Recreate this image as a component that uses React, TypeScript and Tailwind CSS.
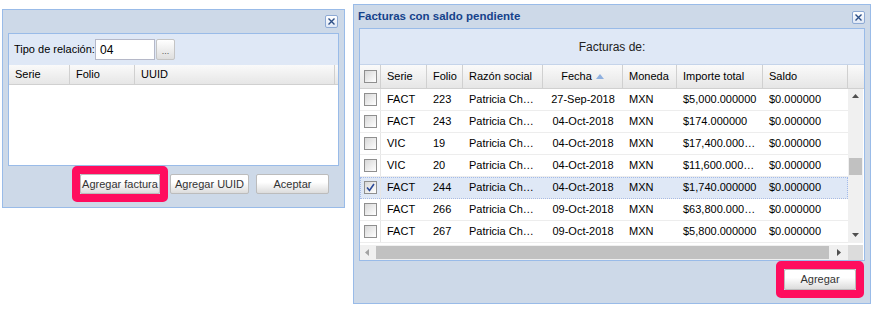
import React from 'react';

const rows = [
  { serie: 'FACT', folio: '223', razon: 'Patricia Ch…', fecha: '27-Sep-2018', moneda: 'MXN', importe: '$5,000.000000', saldo: '$0.000000' },
  { serie: 'FACT', folio: '243', razon: 'Patricia Ch…', fecha: '04-Oct-2018', moneda: 'MXN', importe: '$174.000000', saldo: '$0.000000' },
  { serie: 'VIC', folio: '19', razon: 'Patricia Ch…', fecha: '04-Oct-2018', moneda: 'MXN', importe: '$17,400.000…', saldo: '$0.000000' },
  { serie: 'VIC', folio: '20', razon: 'Patricia Ch…', fecha: '04-Oct-2018', moneda: 'MXN', importe: '$11,600.000…', saldo: '$0.000000' },
  { serie: 'FACT', folio: '244', razon: 'Patricia Ch…', fecha: '04-Oct-2018', moneda: 'MXN', importe: '$1,740.000000', saldo: '$0.000000', selected: true },
  { serie: 'FACT', folio: '266', razon: 'Patricia Ch…', fecha: '09-Oct-2018', moneda: 'MXN', importe: '$63,800.000…', saldo: '$0.000000' },
  { serie: 'FACT', folio: '267', razon: 'Patricia Ch…', fecha: '09-Oct-2018', moneda: 'MXN', importe: '$5,800.000000', saldo: '$0.000000' },
];

function CloseBox() {
  return (
    <span className="flex h-[13px] w-[13px] items-center justify-center rounded-[2px] border border-[#8eaad4] bg-linear-to-b from-white to-[#dfe8f6]">
      <svg width="9" height="9" viewBox="0 0 9 9">
        <path d="M1.5 1.5 L7.5 7.5 M7.5 1.5 L1.5 7.5" stroke="#2d4f86" strokeWidth="1.4" />
      </svg>
    </span>
  );
}

function Check({ checked }: { checked?: boolean }) {
  return (
    <span className="flex h-[13px] w-[13px] items-center justify-center border border-[#8f8f8f] bg-linear-to-br from-[#d8d8d8] to-white">
      {checked && (
        <svg width="11" height="11" viewBox="0 0 11 11">
          <path d="M2 5.5 L4.5 8.5 L9 2" stroke="#2b4a9a" strokeWidth="1.6" fill="none" />
        </svg>
      )}
    </span>
  );
}

function Btn({ label, w, h = 'h-[20px]' }: { label: string; w: string; h?: string }) {
  return (
    <button className={`${w} ${h} rounded-[2px] border border-[#bcbcbc] bg-linear-to-b from-white from-40% to-[#dcdcdc] text-[11px] text-[#333]`}>
      {label}
    </button>
  );
}

const hcell = 'flex h-full items-center border-r border-[#d0d0d0] pl-[6px]';

export default function App() {
  return (
    <div className="flex h-[310px] w-[875px] items-start bg-white font-['Liberation_Sans',Arial,sans-serif] text-[11px] text-black">
      {/* left window */}
      <div className="ml-[2px] mt-[9px] flex h-[199px] w-[343px] flex-col border border-[#99bbe8] bg-[#cdd9e8]">
        <div className="flex h-[23px] items-start justify-end pr-[6px] pt-[5px]">
          <CloseBox />
        </div>
        <div className="mx-[5px] flex h-[133px] flex-col border border-[#99bbe8] bg-[#dfe8f6]">
          <div className="flex h-[31px] items-start pl-[5px] pt-[5px]">
            <span className="w-[81px] text-[11px] leading-[21px]">Tipo de relación:</span>
            <span className="flex h-[21px] w-[60px] items-center border border-[#b5b8c8] bg-white pl-[4px] text-[12px]">04</span>
            <span className="ml-[1px] flex h-[21px] w-[19px] items-end justify-center rounded-[2px] border border-[#c4c4c4] bg-linear-to-b from-white to-[#dedede] pb-[3px] text-[9px] leading-none text-[#555]">
              ...
            </span>
          </div>
          <div className="flex h-[20px] border-b border-[#d0d0d0] bg-linear-to-b from-[#fafafa] to-[#e6e6e6]">
            <div className={`${hcell} w-[61px]`}>Serie</div>
            <div className={`${hcell} w-[65px]`}>Folio</div>
            <div className={`${hcell} w-[200px]`}>UUID</div>
          </div>
          <div className="flex-1 bg-white" />
        </div>
        <div className="flex flex-1 items-start justify-end gap-[7px] pr-[15px]">
          <div className="mr-[-5px] rounded-[5px] border-[8px] border-[#ff0d5e]">
            <Btn label="Agregar factura" w="w-[80px]" />
          </div>
          <div className="mt-[8px]">
            <Btn label="Agregar UUID" w="w-[79px]" />
          </div>
          <div className="mt-[8px]">
            <Btn label="Aceptar" w="w-[73px]" />
          </div>
        </div>
      </div>

      {/* right window */}
      <div className="ml-[8px] mt-[4px] flex h-[300px] w-[518px] flex-col border border-[#99bbe8] bg-[#cdd9e8]">
        <div className="flex h-[23px] items-center justify-between pl-[4px] pr-[5px]">
          <span className="text-[11.5px] font-bold text-[#15428b]">Facturas con saldo pendiente</span>
          <span className="mt-[2px]">
            <CloseBox />
          </span>
        </div>
        <div className="mx-[5px] flex h-[233px] flex-col border border-[#99bbe8] bg-white">
          <div className="flex h-[36px] shrink-0 items-center justify-center border-b border-[#c5d4ea] bg-[#dfe8f6] text-[12px] text-[#222]">
            Facturas de:
          </div>
          <div className="flex h-[24px] shrink-0 border-b border-[#d0d0d0] bg-linear-to-b from-[#fafafa] to-[#e6e6e6]">
            <div className="flex h-full w-[21px] items-center justify-center border-r border-[#d0d0d0]">
              <Check />
            </div>
            <div className={`${hcell} w-[46px]`}>Serie</div>
            <div className={`${hcell} w-[36px]`}>Folio</div>
            <div className={`${hcell} w-[80px]`}>Razón social</div>
            <div className="flex h-full w-[80px] items-center justify-center gap-[4px] border-r border-[#d0d0d0]">
              Fecha
              <svg width="8" height="5" viewBox="0 0 8 5">
                <path d="M0 5 L4 0 L8 5 Z" fill="#8fb0df" />
              </svg>
            </div>
            <div className={`${hcell} w-[54px]`}>Moneda</div>
            <div className={`${hcell} w-[86px]`}>Importe total</div>
            <div className={`${hcell} w-[85px]`}>Saldo</div>
            <div className="flex-1" />
          </div>
          <div className="flex h-[154px] shrink-0">
            <div className="flex w-[488px] flex-col">
              {rows.map((r) => (
                <div
                  key={r.folio}
                  className={`flex h-[22px] shrink-0 items-center border-b border-[#ededed] ${
                    r.selected ? 'bg-[#dfe8f6] outline-1 -outline-offset-1 outline-dotted outline-[#a3bae9]' : ''
                  }`}
                >
                  <div className="flex h-full w-[21px] items-center justify-center border-r border-[#e6e6e6]">
                    <Check checked={r.selected} />
                  </div>
                  <div className="w-[46px] pl-[6px]">{r.serie}</div>
                  <div className="w-[36px] pl-[6px]">{r.folio}</div>
                  <div className="w-[80px] pl-[6px]">{r.razon}</div>
                  <div className="w-[80px] text-center">{r.fecha}</div>
                  <div className="w-[54px] pl-[6px]">{r.moneda}</div>
                  <div className="w-[86px] pl-[6px]">{r.importe}</div>
                  <div className="w-[85px] pl-[6px]">{r.saldo}</div>
                </div>
              ))}
            </div>
            <div className="flex w-[15px] flex-col items-center bg-[#f0f0f0]">
              <svg className="mt-[5px]" width="7" height="4" viewBox="0 0 7 4">
                <path d="M0 4 L3.5 0 L7 4 Z" fill="#505050" />
              </svg>
              <div className="mt-[60px] h-[17px] w-[13px] bg-[#c1c1c1]" />
              <div className="flex-1" />
              <svg className="mb-[6px]" width="7" height="4" viewBox="0 0 7 4">
                <path d="M0 0 L3.5 4 L7 0 Z" fill="#505050" />
              </svg>
            </div>
          </div>
          <div className="mt-[2px] flex h-[15px] shrink-0">
            <div className="flex w-[488px] items-center bg-[#f0f0f0]">
              <svg className="ml-[5px]" width="4" height="7" viewBox="0 0 4 7">
                <path d="M4 0 L0 3.5 L4 7 Z" fill="#a3a3a3" />
              </svg>
              <div className="ml-[7px] h-[13px] w-[453px] bg-[#c1c1c1]" />
              <svg className="ml-[8px]" width="4" height="7" viewBox="0 0 4 7">
                <path d="M0 0 L4 3.5 L0 7 Z" fill="#505050" />
              </svg>
            </div>
            <div className="w-[15px] bg-[#dcdcdc]" />
          </div>
        </div>
        <div className="flex flex-1 items-start justify-end pr-[6px]">
          <div className="rounded-[5px] border-[8px] border-[#ff0d5e]">
            <Btn label="Agregar" w="w-[72px]" h="h-[21px]" />
          </div>
        </div>
      </div>
    </div>
  );
}
